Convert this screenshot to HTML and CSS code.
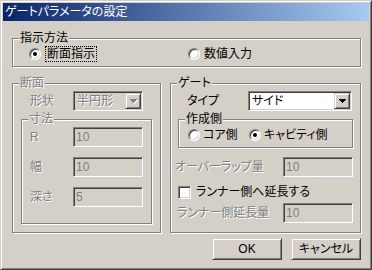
FILE: index.html
```html
<!DOCTYPE html>
<html lang="ja">
<head>
  <meta charset="UTF-8" />
  <title>ゲートパラメータの設定</title>
  <link rel="stylesheet" href="styles.css">
</head>
<body>
  <div class="window">
    <div class="titlebar">ゲートパラメータの設定</div>
    <div class="client">

      <fieldset class="group method">
        <legend>指示方法</legend>
        <div class="method-body">
          <label class="opt"><span class="radio checked"></span><span class="focus">断面指示</span></label>
          <label class="opt"><span class="radio"></span>数値入力</label>
        </div>
      </fieldset>

      <div class="panels">
        <fieldset class="group section">
          <legend class="off">断面</legend>
          <div class="section-body">
            <div class="field shape">
              <span class="lbl off">形状</span>
              <div class="combo disabled">
                <span class="val off">半円形</span>
                <span class="drop off-arrow">
                  <svg width="7" height="4" viewBox="0 0 7 4" shape-rendering="crispEdges"><path d="M0 0h7v1H0zM1 1h5v1H1zM2 2h3v1H2zM3 3h1v1H3z"/></svg>
                </span>
              </div>
            </div>
            <fieldset class="group dims">
              <legend class="off">寸法</legend>
              <div class="dims-body">
                <div class="field"><span class="lbl off">R</span><div class="edit">10</div></div>
                <div class="field gap"><span class="lbl off">幅</span><div class="edit">10</div></div>
                <div class="field gap"><span class="lbl off">深さ</span><div class="edit">5</div></div>
              </div>
            </fieldset>
          </div>
        </fieldset>

        <fieldset class="group gate">
          <legend>ゲート</legend>
          <div class="gate-body">
            <div class="field type-row">
              <span class="lbl">タイプ</span>
              <div class="combo">
                <span class="val">サイド</span>
                <span class="drop">
                  <svg width="7" height="4" viewBox="0 0 7 4" shape-rendering="crispEdges"><path d="M0 0h7v1H0zM1 1h5v1H1zM2 2h3v1H2zM3 3h1v1H3z"/></svg>
                </span>
              </div>
            </div>
            <fieldset class="group side">
              <legend>作成側</legend>
              <div class="side-body">
                <label class="opt"><span class="radio"></span>コア側</label>
                <label class="opt"><span class="radio checked"></span>キャビティ側</label>
              </div>
            </fieldset>
            <div class="field overlap">
              <span class="lbl wide off">オーバーラップ量</span>
              <div class="edit">10</div>
            </div>
            <label class="check-row"><span class="check"></span>ランナー側へ延長する</label>
            <div class="field runner">
              <span class="lbl wide off">ランナー側延長量</span>
              <div class="edit">10</div>
            </div>
          </div>
        </fieldset>
      </div>

      <div class="buttons">
        <button class="btn">OK</button>
        <button class="btn">キャンセル</button>
      </div>
    </div>
  </div>
</body>
</html>
```

FILE: styles.css
```css
* {
  box-sizing: border-box;
}
body {
  margin: 0;
  background: #d4d0c8;
  font: 12px/15px "Liberation Sans", "Noto Sans CJK JP", sans-serif;
  font-feature-settings: "palt";
  color: #000;
}
.window {
  width: 372px;
  height: 270px;
  border: 1px solid;
  border-color: #d4d0c8 #404040 #404040 #d4d0c8;
  box-shadow: inset 1px 1px #fff, inset -1px -1px #808080;
  padding: 2px;
}
.titlebar {
  height: 18px;
  line-height: 18px;
  padding-left: 2px;
  color: #fff;
  background: linear-gradient(to right, #0a246a, #a6caf0);
}
.client {
  padding: 0 8px 0 9px;
}

/* etched group boxes */
.group {
  margin: 0;
  padding: 0;
  min-width: 0;
  border: 1px solid #808080;
  box-shadow: 1px 1px #fff, inset 1px 1px #fff;
}
.group > legend {
  margin-left: 6px;
  padding: 0 1px;
  line-height: 15px;
  background: #d4d0c8;
}
.off {
  color: #808080;
  text-shadow: 1px 1px #fff;
}

.method {
  margin-top: 10px;
}
.method-body {
  display: grid;
  grid-template-columns: 159px auto;
  align-items: center;
  height: 16px;
  padding-left: 16px;
  margin-bottom: 4px;
}
.opt {
  display: flex;
  align-items: center;
  gap: 4px;
  white-space: nowrap;
}
.focus {
  border: 1px dotted #000;
  padding: 0 1px;
  line-height: 14px;
}

.radio {
  position: relative;
  width: 12px;
  height: 12px;
  border-radius: 50%;
  border: 1px solid;
  border-color: #808080 #fff #fff #808080;
  box-shadow: inset 1px 1px #404040, inset -1px -1px #d4d0c8;
  background: #fff;
  flex: none;
}
.radio.checked::after {
  content: "";
  position: absolute;
  left: 3px;
  top: 3px;
  width: 4px;
  height: 4px;
  border-radius: 50%;
  background: #000;
}
.check {
  width: 13px;
  height: 13px;
  border: 1px solid;
  border-color: #808080 #fff #fff #808080;
  box-shadow: inset 1px 1px #404040, inset -1px -1px #d4d0c8;
  background: #fff;
  flex: none;
}

.panels {
  display: flex;
  gap: 9px;
  margin-top: 9px;
}
.section {
  width: 149px;
  flex: none;
}
.gate {
  flex: 1;
}
.section-body {
  padding: 0 8px 8px;
}
.dims {
  margin-top: 1px;
}
.dims-body {
  padding: 0 0 16px 8px;
}
.gate-body {
  padding: 0 7px 9px 4px;
}

.field {
  display: flex;
  align-items: center;
}
.field.gap {
  margin-top: 10px;
}
.shape {
  padding-left: 9px;
}
.lbl {
  width: 43px;
  flex: none;
}
.lbl.wide {
  width: 108px;
}

.edit {
  width: 70px;
  height: 20px;
  border: 1px solid;
  border-color: #808080 #fff #fff #808080;
  box-shadow: inset 1px 1px #404040, inset -1px -1px #d4d0c8;
  padding: 0 2px;
  line-height: 18px;
  color: #808080;
  background: #d4d0c8;
}

.combo {
  display: flex;
  width: 70px;
  height: 20px;
  border: 1px solid;
  border-color: #808080 #fff #fff #808080;
  box-shadow: inset 1px 1px #404040, inset -1px -1px #d4d0c8;
  padding: 1px;
  background: #fff;
}
.combo.disabled {
  background: #d4d0c8;
}
.combo .val {
  flex: 1;
  padding-left: 2px;
  line-height: 16px;
  white-space: nowrap;
}
.drop {
  display: flex;
  align-items: center;
  justify-content: center;
  width: 16px;
  height: 16px;
  border: 1px solid;
  border-color: #d4d0c8 #404040 #404040 #d4d0c8;
  box-shadow: inset 1px 1px #fff, inset -1px -1px #808080;
  background: #d4d0c8;
}
.drop svg {
  fill: #000;
}
.off-arrow svg {
  fill: #808080;
  filter: drop-shadow(1px 1px 0 #fff);
}

.type-row {
  padding-left: 12px;
}
.type-row .lbl {
  width: 61px;
}
.type-row .combo {
  width: 104px;
}
.side {
  margin: 1px 0 0 3px;
}
.side-body {
  display: grid;
  grid-template-columns: 61px auto;
  align-items: center;
  height: 16px;
  padding-left: 9px;
  margin-bottom: 4px;
}
.side-body .opt {
  gap: 3px;
}
.overlap {
  margin-top: 9px;
}
.check-row {
  display: flex;
  align-items: center;
  gap: 5px;
  height: 16px;
  margin-top: 7px;
  padding-left: 3px;
}
.runner {
  margin-top: 3px;
}
.runner .lbl {
  padding-left: 2px;
}

.buttons {
  display: flex;
  justify-content: flex-end;
  gap: 9px;
  margin-top: 5px;
}
.btn {
  width: 70px;
  height: 22px;
  padding: 0;
  font: inherit;
  font-feature-settings: "palt";
  color: #000;
  border: 1px solid;
  border-color: #d4d0c8 #404040 #404040 #d4d0c8;
  box-shadow: inset 1px 1px #fff, inset -1px -1px #808080;
  background: #d4d0c8;
}
```
